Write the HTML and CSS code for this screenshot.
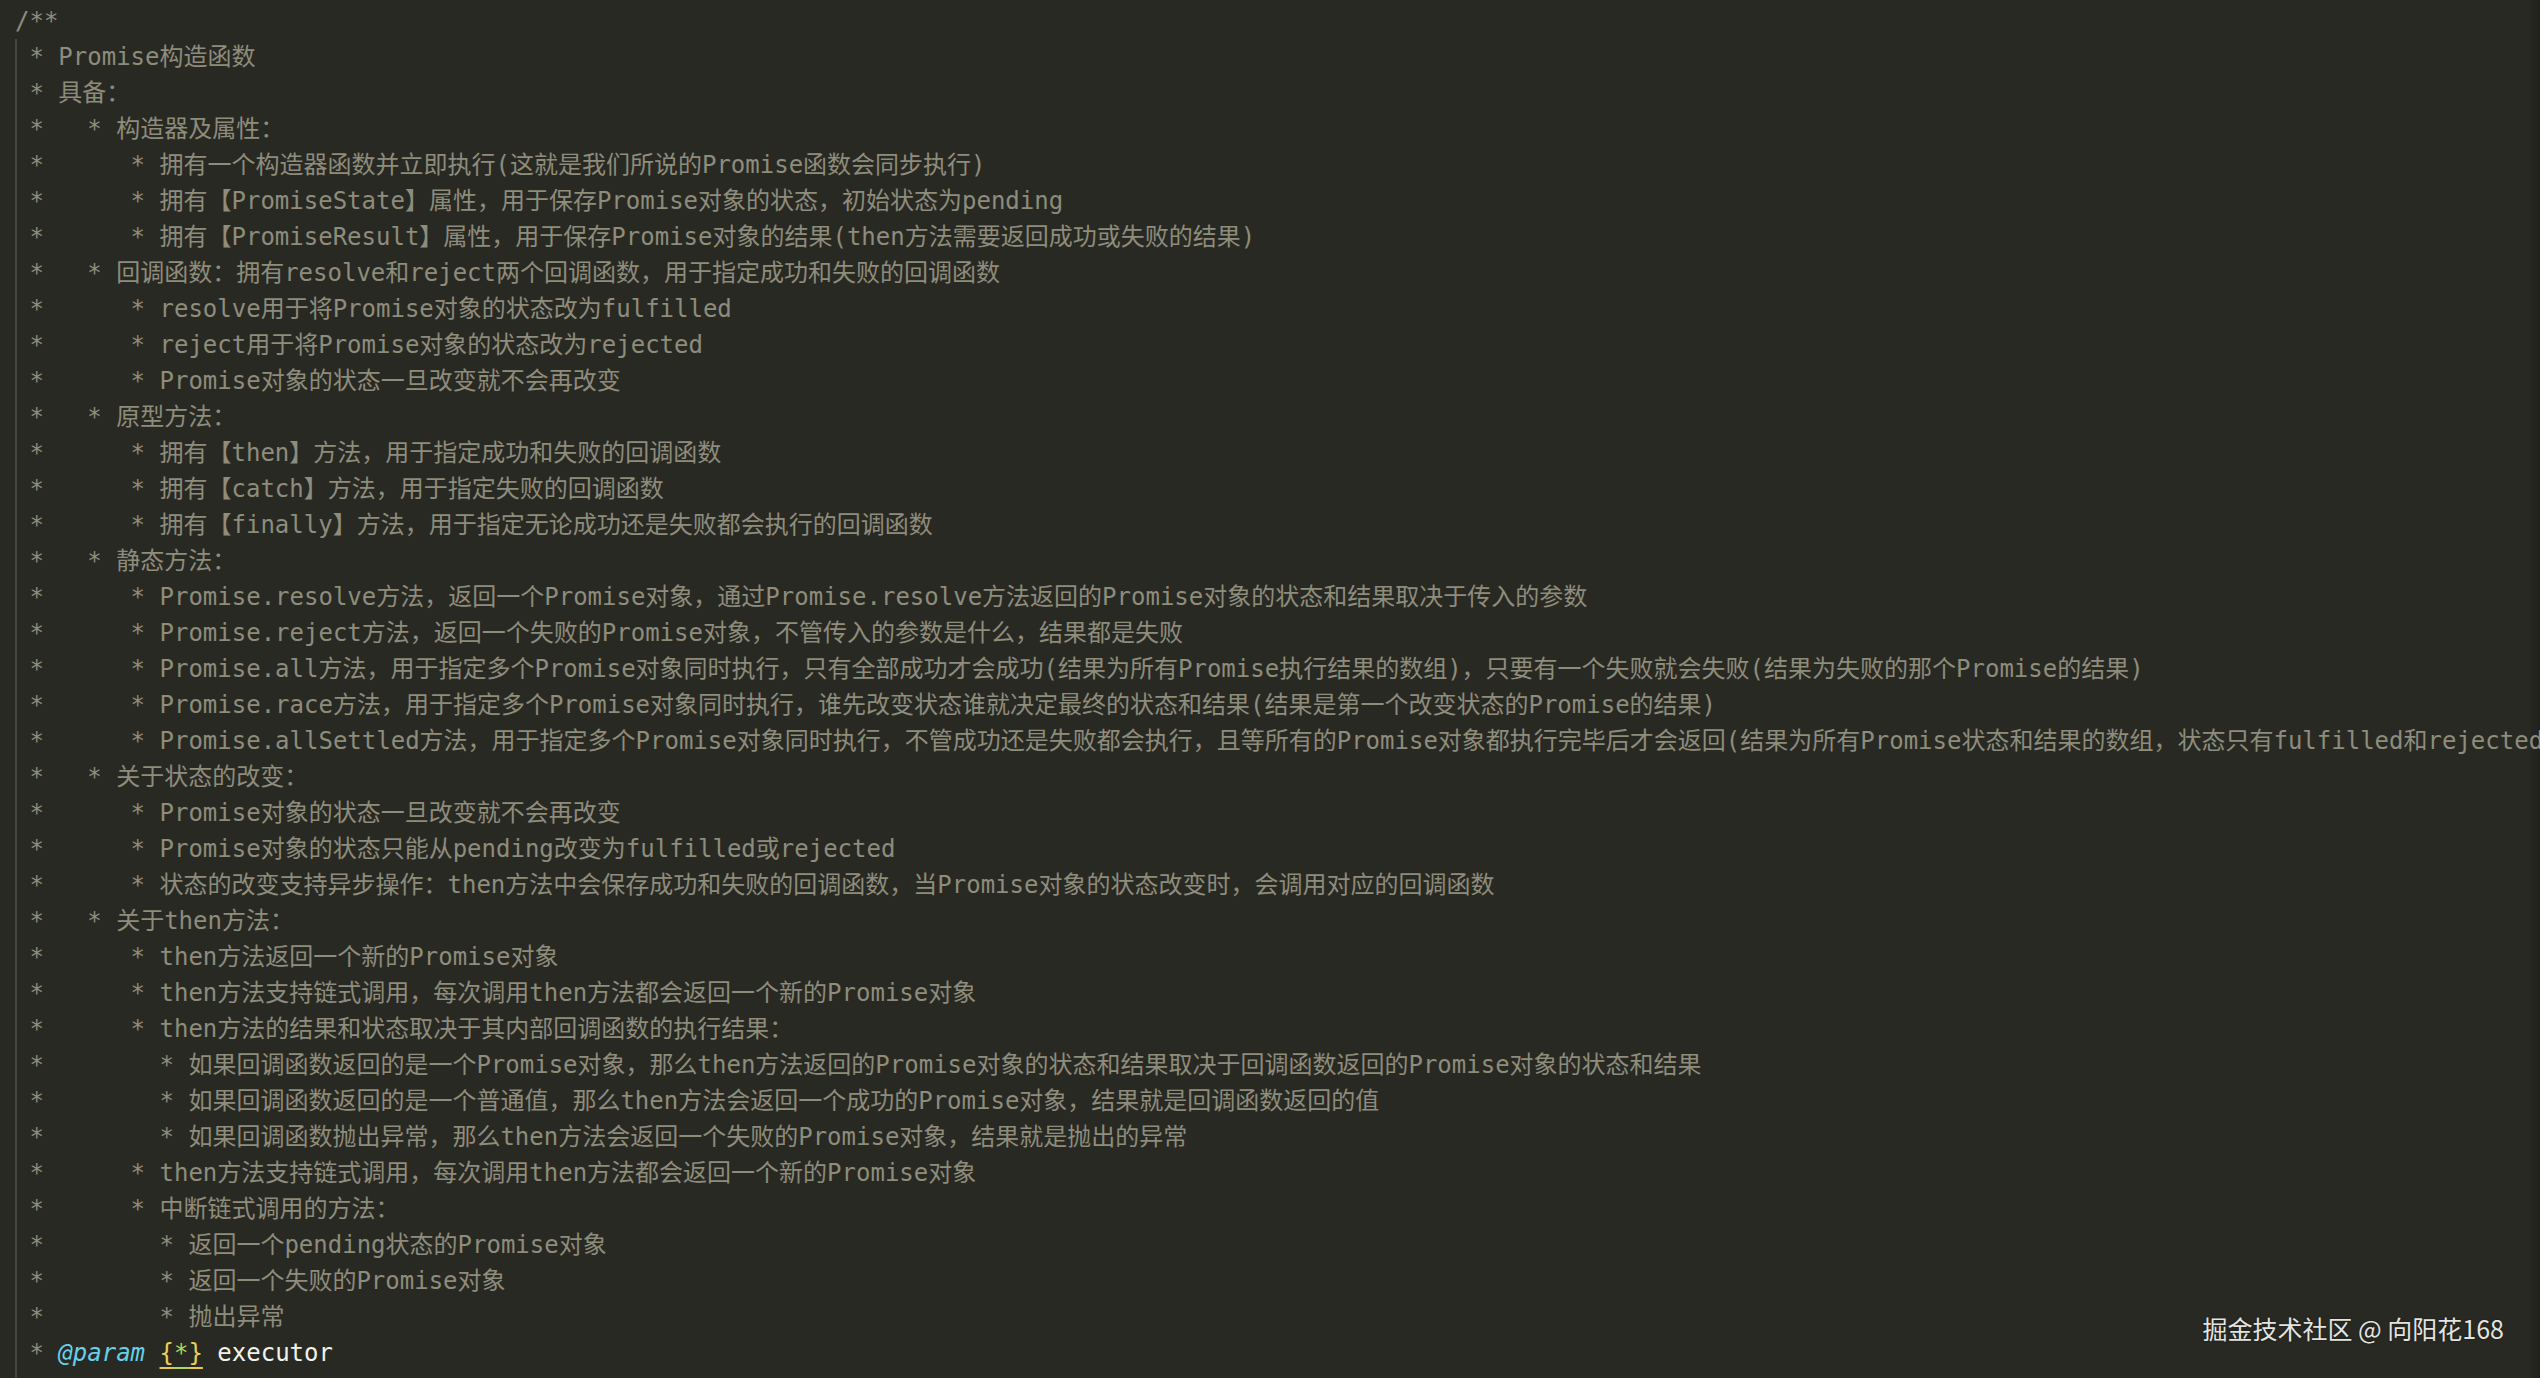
FILE: index.html
```html
<!DOCTYPE html>
<html lang="zh-CN">
<head>
<meta charset="utf-8">
<title>Promise构造函数</title>
<link rel="stylesheet" href="styles.css">
</head>
<body>
<div class="page">
  <div class="code">
    <div class="ln">/**</div>
    <div class="block">
      <div class="ln"> * Promise构造函数</div>
      <div class="ln"> * 具备：</div>
      <div class="ln"> *   * 构造器及属性：</div>
      <div class="ln"> *      * 拥有一个构造器函数并立即执行(这就是我们所说的Promise函数会同步执行)</div>
      <div class="ln"> *      * 拥有【PromiseState】属性，用于保存Promise对象的状态，初始状态为pending</div>
      <div class="ln"> *      * 拥有【PromiseResult】属性，用于保存Promise对象的结果(then方法需要返回成功或失败的结果)</div>
      <div class="ln"> *   * 回调函数：拥有resolve和reject两个回调函数，用于指定成功和失败的回调函数</div>
      <div class="ln"> *      * resolve用于将Promise对象的状态改为fulfilled</div>
      <div class="ln"> *      * reject用于将Promise对象的状态改为rejected</div>
      <div class="ln"> *      * Promise对象的状态一旦改变就不会再改变</div>
      <div class="ln"> *   * 原型方法：</div>
      <div class="ln"> *      * 拥有【then】方法，用于指定成功和失败的回调函数</div>
      <div class="ln"> *      * 拥有【catch】方法，用于指定失败的回调函数</div>
      <div class="ln"> *      * 拥有【finally】方法，用于指定无论成功还是失败都会执行的回调函数</div>
      <div class="ln"> *   * 静态方法：</div>
      <div class="ln"> *      * Promise.resolve方法，返回一个Promise对象，通过Promise.resolve方法返回的Promise对象的状态和结果取决于传入的参数</div>
      <div class="ln"> *      * Promise.reject方法，返回一个失败的Promise对象，不管传入的参数是什么，结果都是失败</div>
      <div class="ln"> *      * Promise.all方法，用于指定多个Promise对象同时执行，只有全部成功才会成功(结果为所有Promise执行结果的数组)，只要有一个失败就会失败(结果为失败的那个Promise的结果)</div>
      <div class="ln"> *      * Promise.race方法，用于指定多个Promise对象同时执行，谁先改变状态谁就决定最终的状态和结果(结果是第一个改变状态的Promise的结果)</div>
      <div class="ln"> *      * Promise.allSettled方法，用于指定多个Promise对象同时执行，不管成功还是失败都会执行，且等所有的Promise对象都执行完毕后才会返回(结果为所有Promise状态和结果的数组，状态只有fulfilled和rejected)</div>
      <div class="ln"> *   * 关于状态的改变：</div>
      <div class="ln"> *      * Promise对象的状态一旦改变就不会再改变</div>
      <div class="ln"> *      * Promise对象的状态只能从pending改变为fulfilled或rejected</div>
      <div class="ln"> *      * 状态的改变支持异步操作：then方法中会保存成功和失败的回调函数，当Promise对象的状态改变时，会调用对应的回调函数</div>
      <div class="ln"> *   * 关于then方法：</div>
      <div class="ln"> *      * then方法返回一个新的Promise对象</div>
      <div class="ln"> *      * then方法支持链式调用，每次调用then方法都会返回一个新的Promise对象</div>
      <div class="ln"> *      * then方法的结果和状态取决于其内部回调函数的执行结果：</div>
      <div class="ln"> *        * 如果回调函数返回的是一个Promise对象，那么then方法返回的Promise对象的状态和结果取决于回调函数返回的Promise对象的状态和结果</div>
      <div class="ln"> *        * 如果回调函数返回的是一个普通值，那么then方法会返回一个成功的Promise对象，结果就是回调函数返回的值</div>
      <div class="ln"> *        * 如果回调函数抛出异常，那么then方法会返回一个失败的Promise对象，结果就是抛出的异常</div>
      <div class="ln"> *      * then方法支持链式调用，每次调用then方法都会返回一个新的Promise对象</div>
      <div class="ln"> *      * 中断链式调用的方法：</div>
      <div class="ln"> *        * 返回一个pending状态的Promise对象</div>
      <div class="ln"> *        * 返回一个失败的Promise对象</div>
      <div class="ln"> *        * 抛出异常</div>
      <div class="ln"> * <span class="tag">@param</span> <span class="type"><span class="brace">{</span><span class="star">*</span><span class="brace">}</span></span> <span class="name">executor</span></div>
    </div>
  </div>
  <div class="watermark">掘金技术社区 @ 向阳花168</div>
</div>
</body>
</html>
```
FILE: styles.css
```css
html, body {
  margin: 0;
  padding: 0;
  background: #292924;
}

.page {
  position: relative;
  width: 2540px;
  height: 1378px;
  overflow: hidden;
  background: linear-gradient(to left, #20201d 0, #252521 9px, #292924 10px, #292924 100%);
}

.code {
  padding: 3px 0 0 15px;
  font-family: "DejaVu Sans Mono", "Noto Sans CJK SC", monospace;
  font-size: 24px;
  color: #8e8c7b;
}

.block {
  box-shadow: inset 2px 0 0 #46463f;
  padding-bottom: 40px;
}

.ln {
  height: 36px;
  line-height: 36px;
  white-space: pre;
  overflow: visible;
}

.tag {
  color: #66cfe9;
  font-style: italic;
}

.type {
  text-decoration: underline;
  text-decoration-color: #e6c94f;
  text-decoration-thickness: 2px;
  text-underline-offset: 6px;
}

.brace {
  color: #e8cf55;
}

.star {
  color: #a9d95a;
  text-decoration: underline;
  text-decoration-color: #a9d95a;
  text-decoration-thickness: 2px;
  text-underline-offset: 6px;
}

.name {
  color: #f2f2ec;
}

.watermark {
  position: absolute;
  right: 36px;
  bottom: 35px;
  font-family: "Noto Sans CJK SC", "Noto Sans", sans-serif;
  font-size: 25px;
  line-height: 30px;
  color: #e4e4e0;
  text-shadow: 0 0 2px rgba(0, 0, 0, 0.6);
}
```
